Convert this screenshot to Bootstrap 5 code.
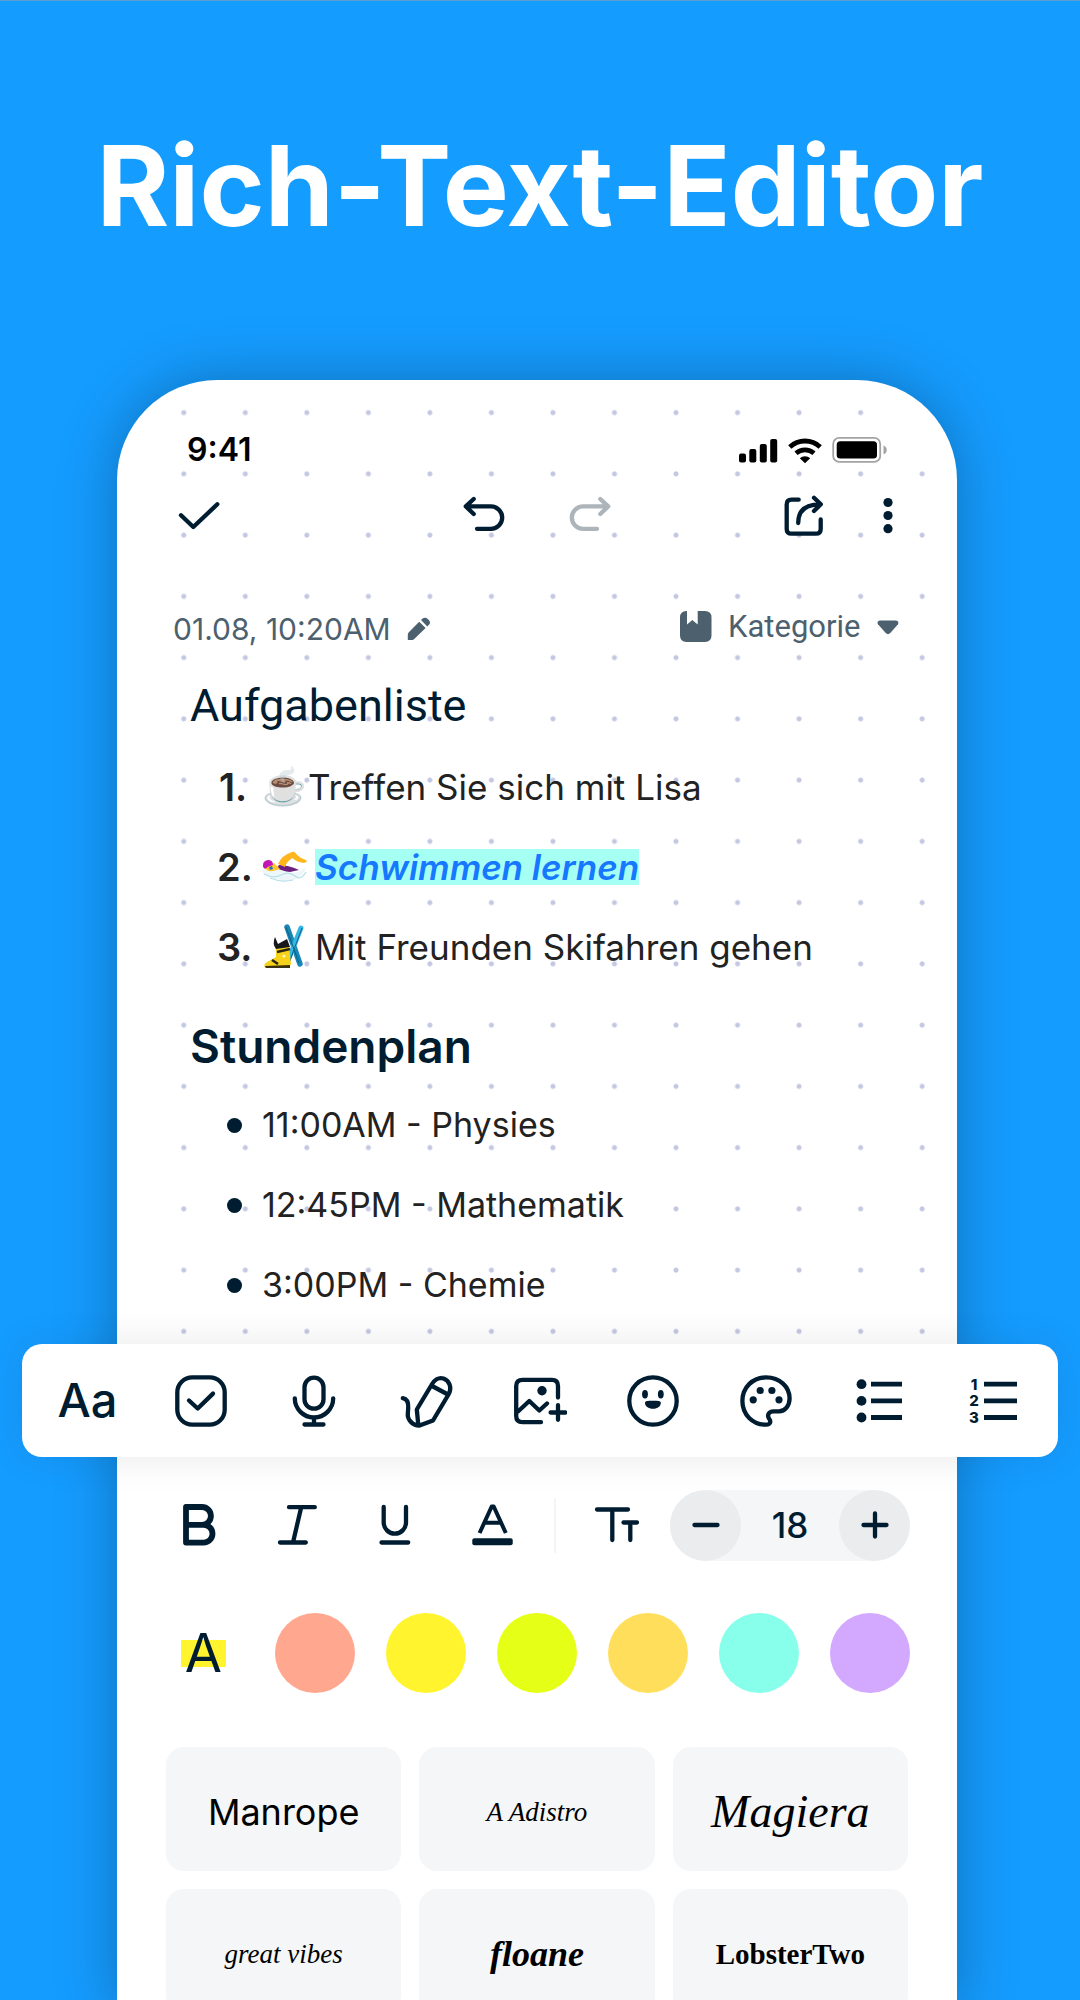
<!DOCTYPE html>
<html lang="de">
<head>
<meta charset="utf-8">
<meta name="viewport" content="width=device-width, initial-scale=1">
<title>Rich-Text-Editor</title>
<link rel="stylesheet" href="https://cdn.jsdelivr.net/npm/bootstrap@5.3.0/dist/css/bootstrap.min.css">
<style>
:root{--ink:#001c30;--slate:#4d606e;--tile:#f4f6f8}
body{background:#159cff;font-family:Inter,"Liberation Sans",sans-serif;color:var(--ink)}
button,input,select{font-family:inherit;color:inherit}
button{background:none;border:0;padding:0}
svg{display:block;flex:none}
.ico{fill:none;stroke:currentColor;stroke-width:4.3;stroke-linecap:round;stroke-linejoin:round}
.ico .solid{fill:currentColor;stroke:none}
.stage{height:100vh;overflow:hidden;border-top:1px solid #5b9fd2}
.hero-title{font-size:111px;line-height:132px;font-weight:700;padding:119px 0 128px}
.phone{margin:0 123px 0 117px;background:#fff;border-radius:100px 100px 0 0;box-shadow:0 0 60px rgba(0,0,0,.28)}
.note{position:relative;padding:51px 0 19px}
.note::before{content:"";position:absolute;inset:2px 4px -18px 36px;border-top-right-radius:124px;background:radial-gradient(circle at center,#c4c7e2 2px,transparent 3px) 0 0/61px 61px round}
.note>*{position:relative}
.status{height:38px;padding:0 69px 0 70px;color:#000}
.clock{font-size:32px;line-height:40px;font-weight:600}
.topbar{display:grid;grid-template-columns:1fr auto 1fr;height:60px;margin-top:16px;padding:0 47px;align-items:center}
.check-btn{display:block;padding:0 13px}
.undo-group{gap:62px}
.share-group{gap:40px}
.redo-btn{color:#adb5bb}
.meta{height:40px;margin-top:64px;padding:0 58px 0 56px;color:var(--slate)}
.stamp{font-size:30px;line-height:40px}
.category{appearance:none;border:0;background:none;padding:0;font:31px/38px Roboto,sans-serif;color:var(--slate)}
.note h2{line-height:56px;padding-left:73px;margin:0}
.note .h-tasks{font-size:45px;font-family:Roboto,sans-serif;font-weight:400;margin-top:29px}
.note .h-plan{font-size:46px;font-weight:600;margin-top:31px}
.tasks,.plan{font-size:35px;line-height:80px;color:#222}
.tasks li,.plan li{height:80px}
.tasks{margin:13px 0 0;padding-left:100px}
.plan{font-size:34px;margin:11px 0 0;padding-left:110px}
.num{width:45px;font-size:38px;font-weight:600}
.num.first{padding-left:2px}
.cup{font-family:"Noto Color Emoji",sans-serif;font-size:36px;width:46px}
.glyph{margin-right:8px}
.marked{background:#a5fff3;color:#1677ff;font-style:italic;font-weight:600;line-height:36px}
.dot{width:15px;height:15px;border-radius:50%;background:var(--ink);margin-right:20px}
.tools{position:relative;z-index:1;height:113px;margin:0 -101px 0 -95px;padding:0 9px;background:#fff;border-radius:20px;box-shadow:0 0 40px rgba(0,0,0,.09)}
.tools button{flex:1 1 0;display:flex;align-items:center;justify-content:center;height:100%}
.aa{font-size:47px;font-weight:500}
.format{height:72px;margin-top:32px;padding:0 47px 0 52px}
.format .btns{gap:38px}
.heavy{stroke-width:5.8}
.rule{width:2px;height:55px;background:#f4f5f6;margin:0 31px}
.stepper{width:240px;height:71px;border-radius:36px;background:var(--tile)}
.stepper button{width:71px;height:71px;border-radius:50%;background:#ebecee;display:grid;place-items:center}
.stepper input{width:98px;border:0;background:none;text-align:center;font-size:35px;font-weight:500;padding:0}
.colors{margin-top:52px;padding:0 47px 0 64px}
.swatches{gap:31px}
.marker{width:45px;height:80px;font-size:54px;line-height:80px;background:linear-gradient(#fff42d,#fff42d) 0 27px/100% 27px no-repeat}
.swatch{appearance:none;width:80px;height:80px;border-radius:50%;margin:0}
.c1{background:#ffa78f}.c2{background:#fff42d}.c3{background:#e6ff17}.c4{background:#ffde5c}.c5{background:#88ffea}.c6{background:#d3a8ff}
.fonts{display:grid;grid-template-columns:repeat(3,1fr);gap:18px;margin-top:54px;padding:0 49px}
.tile{height:124px;padding-top:6px;border-radius:18px;background:var(--tile);color:#000;font:italic 27px/40px "Liberation Serif",serif}
.t-sans{font:400 36px/40px Inter,sans-serif}
.t-big{font-size:46px}
.t-bold{font-size:36px;font-weight:700}
.t-slab{font:700 29px/40px "Liberation Serif",serif}
</style>
</head>
<body>
<div class="stage">
<h1 class="hero-title text-white text-center text-nowrap m-0">Rich-Text-Editor</h1>
<main class="phone">
<section class="note">
  <div class="status d-flex justify-content-between align-items-center">
    <span class="clock">9:41</span>
    <svg width="149" height="28" viewBox="0 0 149 28" role="img" aria-label="Signal, WLAN, Akku">
      <rect x="0" y="17.5" width="7" height="9" rx="2"/><rect x="10.3" y="13" width="7" height="13.5" rx="2"/><rect x="20.8" y="8" width="7" height="18.5" rx="2"/><rect x="31.2" y="3" width="7" height="23.5" rx="2"/>
      <path d="M50.8 11a22.3 22.3 0 0 1 30.4 0M57 17.3a13.8 13.8 0 0 1 18 0" fill="none" stroke="#000" stroke-width="4.8"/>
      <path d="M60.8 22.2a8 8 0 0 1 10.4 0L66 27.3z"/>
      <rect x="94.2" y="1.9" width="47" height="24" rx="6" fill="none" stroke="#a3a3a3" stroke-width="1.8"/>
      <rect x="97.7" y="5.3" width="40.3" height="17.2" rx="3.5"/>
      <path d="M144.5 9.5q3.2 1.3 3.2 4.4t-3.2 4.4z" fill="#a3a3a3"/>
    </svg>
  </div>
  <div class="topbar">
    <div><button class="check-btn" aria-label="Fertig"><svg class="ico" width="44" height="44"><path d="M4 22.3L16.3 34L40.3 11.3"/></svg></button></div>
    <div class="undo-group d-flex">
      <button aria-label="Rückgängig"><svg class="ico" width="44" height="44"><path d="M11.7 6L3.8 13.4L11.7 21M3.8 13.4H29a11.2 11.2 0 0 1 0 22.4H15"/></svg></button>
      <button class="redo-btn" aria-label="Wiederholen"><svg class="ico" width="44" height="44"><path d="M32.3 6L40.2 13.4L32.3 21M40.2 13.4H15a11.2 11.2 0 0 0 0 22.4H29"/></svg></button>
    </div>
    <div class="share-group d-flex justify-content-end">
      <button aria-label="Teilen"><svg class="ico" width="44" height="44"><path d="M16.7 6.7H9.5Q4.7 6.7 4.7 11.5V36Q4.7 40.7 9.5 40.7H34Q38.7 40.7 38.7 36V26.5M16.2 30C16.2 18 23 11.3 38 11.3M32 4.8L38.8 11.3L32 18"/></svg></button>
      <button aria-label="Mehr"><svg class="ico" width="44" height="44"><g class="solid"><circle cx="22" cy="9.5" r="4.6"/><circle cx="22" cy="22.5" r="4.6"/><circle cx="22" cy="35.7" r="4.6"/></g></svg></button>
    </div>
  </div>
  <div class="meta d-flex justify-content-between align-items-center">
    <button class="d-flex align-items-center"><span class="stamp">01.08, 10:20AM</span>
      <svg class="ms-3" width="24" height="24" fill="currentColor"><path d="M12.2 4.8L18.6 11L7 22.3Q6.2 23 5.2 23H.8V18Q.8 16.4 1.8 15.3zM14 3L15.6 1.5Q18.4-.3 20.8 2Q24.4 5 22.2 7.6L20.3 9.4z"/></svg></button>
    <div class="d-flex align-items-center mb-1">
      <svg width="32" height="32" fill="currentColor"><path d="M7 0V13.5L12.3 9L17.7 13.5V0H25Q31.5 0 31.5 6.5V24.5Q31.5 31 25 31H6.5Q0 31 0 24.5V6.5Q0 0 6.5 0z"/></svg>
      <label class="visually-hidden" for="cat">Kategorie wählen</label>
      <select class="category ms-3 me-3" id="cat"><option>Kategorie</option></select>
      <svg width="22" height="15" fill="currentColor"><path d="M2.8.5H19Q22.4 1 21 4.2L13.3 13Q11 15.3 8.7 13L1 4.2Q-.6 1 2.8.5z"/></svg>
    </div>
  </div>
  <h2 class="h-tasks">Aufgabenliste</h2>
  <ol class="tasks list-unstyled">
    <li class="d-flex"><span class="num first">1.</span><span class="cup">☕</span><span>Treffen Sie sich mit Lisa</span></li>
    <li class="d-flex align-items-center"><span class="num">2.</span>
      <svg class="glyph" width="45" height="34" viewBox="0 0 45 34" aria-hidden="true">
        <path d="M1 20Q10 16 22 21T44 17Q42 27 29 31Q14 31 1 24z" fill="#edf7fa"/>
        <path d="M2 24Q11 29 19 25T33 26T44 22M8 28Q20 33 31 30" fill="none" stroke="#b9dfea" stroke-width="1.2"/>
        <path d="M17 15Q26 15 37 20L28 22Q20 21 15 18z" fill="#6d1f80"/>
        <path d="M16 14Q20 5 30 2Q32 1 33.500 3Q37 8 44 10Q46 12 42 13Q34 12 30.500 8Q25 11 23 17z" fill="#fdb71c"/>
        <path d="M3 17Q4 22 11 21L18 19L12 13z" fill="#ffc52d"/>
        <path d="M1 17Q0 11 6 10Q11 10 11 15Q6 16 3 19z" fill="#c316b4"/>
        <path d="M7 17L10 16L11 19L8 20z" fill="#2d6fc0"/>
      </svg><span class="marked">Schwimmen lernen</span></li>
    <li class="d-flex align-items-center"><span class="num">3.</span>
      <svg class="glyph" width="45" height="46" viewBox="0 0 45 46" aria-hidden="true">
        <path d="M25 3L38 40" stroke="#1887b5" stroke-width="5.5" stroke-linecap="round"/>
        <path d="M39 4L25 39" stroke="#37b6e2" stroke-width="5" stroke-linecap="round"/>
        <path d="M24 3L37 39M40 4L27 39" stroke="#0f5f88" stroke-width="1"/>
        <path d="M14 24L27 22L29 40L27 43L3 44Q1 40 5 38L14 33z" fill="#f6d21b"/>
        <path d="M3 42L28 41V44H4z" fill="#3a3210"/>
        <path d="M13 13L16 20L25 15L28 23L14 25Q10 20 13 13z" fill="#17181c"/>
        <path d="M15 28L28 25M10 36L16 40" stroke="#2a2614" stroke-width="2.5"/>
        <circle cx="22" cy="32" r="1.6" fill="#fff6b0"/>
      </svg><span>Mit Freunden Skifahren gehen</span></li>
  </ol>
  <h2 class="h-plan">Stundenplan</h2>
  <ul class="plan list-unstyled">
    <li class="d-flex align-items-center"><span class="dot"></span>11:00AM - Physies</li>
    <li class="d-flex align-items-center"><span class="dot"></span>12:45PM - Mathematik</li>
    <li class="d-flex align-items-center"><span class="dot"></span>3:00PM - Chemie</li>
  </ul>
</section>
<nav class="tools d-flex" aria-label="Einfügen">
  <button class="aa" aria-label="Text">Aa</button>
  <button aria-label="Checkliste"><svg class="ico" width="54" height="54"><rect x="3.3" y="3.3" width="47.4" height="47.4" rx="15"/><path d="M15 26.5L23.7 34.5L39 19.6"/></svg></button>
  <button aria-label="Aufnahme"><svg class="ico" width="54" height="54"><rect x="17.5" y="3.7" width="19" height="31" rx="9.5"/><path d="M7.8 24.3a19.2 19.2 0 0 0 38.4 0M27 43.5V50M17.5 50.5H36.5"/></svg></button>
  <button aria-label="Zeichnen"><svg class="ico" width="54" height="54"><path d="M2.8 24.2C7 25 8.6 28.5 8.2 34C8 40 6.5 43 10.5 47.5C13 50.5 16 51.5 19.5 51.5L33 46.5L48.5 20.5C52.5 13 49 6.5 43.5 4.5C38.5 3 34 6 31.5 11L16.8 35.5L18.2 50M33 12.5L47 20"/></svg></button>
  <button aria-label="Bild"><svg class="ico" width="54" height="54"><path d="M45 23.5V12Q45 5.8 39 5.8H9.5Q3.2 5.8 3.2 12V42Q3.2 48.2 9.5 48.2H28M5 37.5L16.3 27L26.3 36.5L34 29.5M37.6 38.5H52.4M45 31.2V45.8"/><circle class="solid" cx="29" cy="16.8" r="4.7"/></svg></button>
  <button aria-label="Emoji"><svg class="ico" width="54" height="54"><circle cx="27" cy="27" r="23.7"/><g class="solid"><ellipse cx="19" cy="20.2" rx="2.9" ry="4.2"/><ellipse cx="34.8" cy="20.2" rx="2.9" ry="4.2"/><path d="M19 29c0-2 2-2.2 8-2.2s7.8.2 7.8 2.2c0 3-3 5.8-7.8 5.8S19 32 19 29z"/></g></svg></button>
  <button aria-label="Farben"><svg class="ico" width="54" height="54"><path d="M27.2 50.7C13.5 50.7 3.4 40.5 3.4 27S13.5 3.4 27.2 3.4S50.6 13 50.6 24.5C50.6 31.5 46 37.3 40 37.3H34.5C29.5 37.3 28 41.5 30 44.5C32.5 48 31 50.7 27.2 50.7Z"/><g class="solid"><circle cx="14.2" cy="25.8" r="3.6"/><circle cx="21.2" cy="16.5" r="3.6"/><circle cx="32.9" cy="16.5" r="3.6"/><circle cx="40" cy="25.8" r="3.6"/></g></svg></button>
  <button aria-label="Liste"><svg width="54" height="54" fill="currentColor"><circle cx="9.5" cy="10.2" r="4.9"/><circle cx="9.5" cy="26.9" r="4.9"/><circle cx="9.5" cy="43.5" r="4.9"/><path d="M19 7.8h31v4.8H19zM19 24.5h31v4.8H19zM19 41.1h31v4.8H19z"/></svg></button>
  <button aria-label="Nummerierte Liste"><svg width="54" height="54" fill="currentColor" font-size="15" font-weight="800" text-anchor="middle"><text x="9" y="16">1</text><text x="9" y="32">2</text><text x="9" y="49">3</text><path d="M19 7.8h33v4.8H19zM19 24.5h33v4.8H19zM19 41.1h33v4.8H19z"/></svg></button>
</nav>
<section>
  <div class="format d-flex align-items-center">
    <div class="btns d-flex">
      <button aria-label="Fett"><svg class="ico heavy" width="60" height="60"><path d="M17 12H33A8.9 8.9 0 0 1 33 29.8H17M33 29.8H34.6A8.9 8.9 0 0 1 34.6 47.6H17V12"/></svg></button>
      <button aria-label="Kursiv"><svg class="ico" width="60" height="60"><path d="M22 12.2H47.8M13 47.5H38.8M34.2 12.2L26 47.5"/></svg></button>
      <button aria-label="Unterstrichen"><svg class="ico" width="60" height="60"><path d="M18.7 12V27.5a11.15 11.15 0 0 0 22.3 0V12M16.5 47.5H43.2"/></svg></button>
      <button aria-label="Textfarbe"><svg class="ico" width="60" height="60"><path d="M16.6 38L28.7 11.5H30.7L42.8 38M21 27.7H38.5" stroke-linecap="butt" stroke-width="4"/><rect class="solid" x="9.3" y="43.2" width="40.4" height="7" rx="2"/></svg></button>
    </div>
    <span class="rule"></span>
    <button aria-label="Schriftgröße"><svg class="ico" width="60" height="60"><path d="M10 14.5H41M25.3 14.5V45M36.5 27.5H50M43.3 27.5V45"/></svg></button>
    <div class="stepper d-flex align-items-center ms-auto">
      <button aria-label="Kleiner"><svg class="ico" width="28" height="28"><path d="M2.5 14H25.5"/></svg></button>
      <input type="text" value="18" aria-label="Größe">
      <button aria-label="Größer"><svg class="ico" width="28" height="28"><path d="M2.5 14H25.5M14 2.5V25.5"/></svg></button>
    </div>
  </div>
  <div class="colors d-flex justify-content-between align-items-center">
    <button class="marker" aria-label="Textmarker">A</button>
    <div class="swatches d-flex">
      <input class="swatch c1" type="radio" name="mark" aria-label="Lachs">
      <input class="swatch c2" type="radio" name="mark" aria-label="Gelb">
      <input class="swatch c3" type="radio" name="mark" aria-label="Limette">
      <input class="swatch c4" type="radio" name="mark" aria-label="Bernstein">
      <input class="swatch c5" type="radio" name="mark" aria-label="Türkis">
      <input class="swatch c6" type="radio" name="mark" aria-label="Lila">
    </div>
  </div>
  <div class="fonts">
    <button class="tile t-sans">Manrope</button>
    <button class="tile">A Adistro</button>
    <button class="tile t-big">Magiera</button>
    <button class="tile">great vibes</button>
    <button class="tile t-bold">floane</button>
    <button class="tile t-slab">LobsterTwo</button>
  </div>
</section>
</main>
</div>
<script src="https://cdn.jsdelivr.net/npm/bootstrap@5.3.0/dist/js/bootstrap.bundle.min.js"></script>
</body>
</html>
